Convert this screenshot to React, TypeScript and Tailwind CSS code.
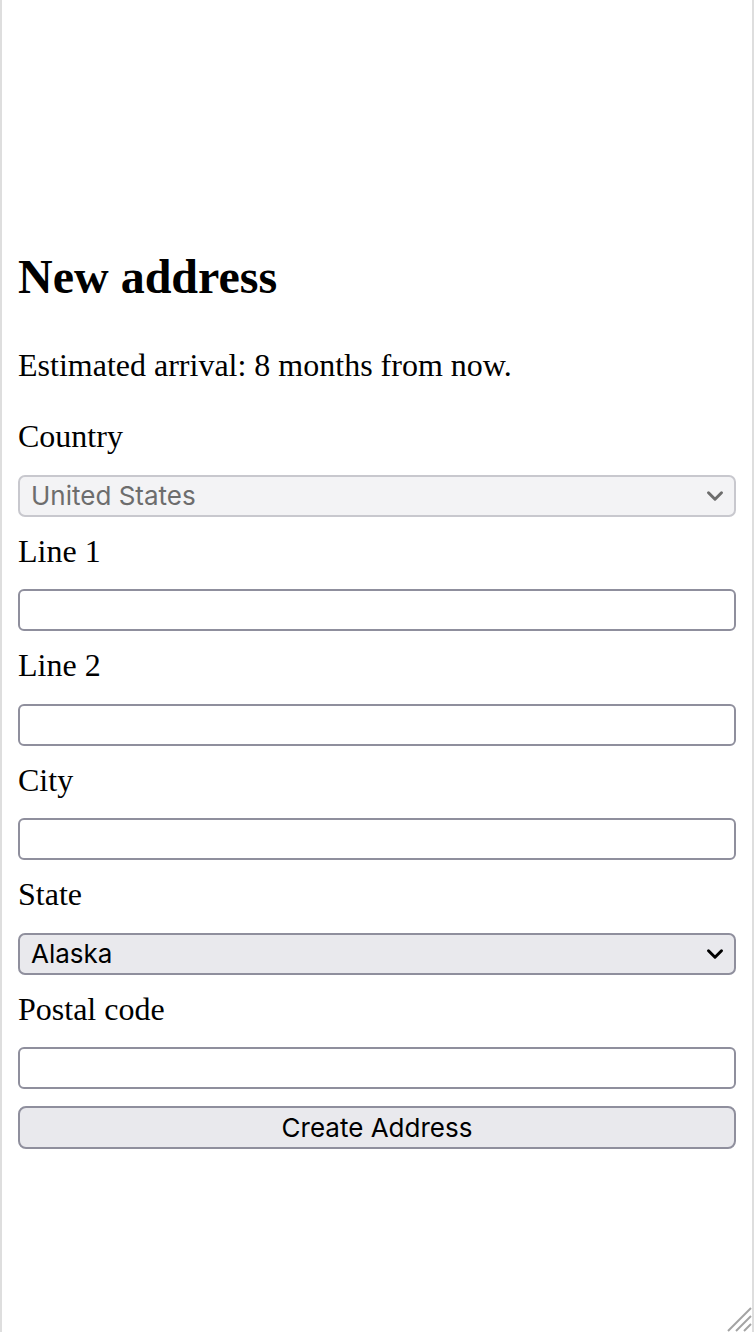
import { ChevronDown } from "lucide-react";

const serif = "font-['Liberation_Serif','Times_New_Roman',serif]";
const ui = "font-['Inter','Liberation_Sans',sans-serif]";

function Field({ label, children }: { label: string; children: React.ReactNode }) {
  return (
    <div className="mt-[11px] first:mt-0">
      <label className={`block pt-[5px] text-[32px] leading-[37px] text-black ${serif}`}>{label}</label>
      <div className="mt-[19.5px]">{children}</div>
    </div>
  );
}

function TextInput() {
  return (
    <input
      type="text"
      className={`block h-[42px] w-full rounded-[6px] border-2 border-[#8f8f9d] bg-white px-3 text-[26px] ${ui}`}
    />
  );
}

function Select({ value, disabled }: { value: string; disabled?: boolean }) {
  return (
    <div className="relative">
      <select
        disabled={disabled}
        defaultValue={value}
        className={`block h-[42px] w-full appearance-none rounded-[7px] border-2 pl-[11px] text-[26px] leading-[38px] ${ui} ${
          disabled
            ? "border-[#c8c8ce] bg-[#f3f3f5] text-[#6d6d6d]"
            : "border-[#8f8f9d] bg-[#e9e9ed] text-black"
        }`}
      >
        <option>{value}</option>
      </select>
      <ChevronDown
        strokeWidth={2.75}
        className={`pointer-events-none absolute right-[8px] top-[8px] h-[26px] w-[26px] ${
          disabled ? "text-[#6d6d6d]" : "text-black"
        }`}
      />
    </div>
  );
}

export default function App() {
  return (
    <div className="relative min-h-screen w-full border-x-2 border-[#dedede] bg-white px-4 pt-[249px]">
      <h1 className={`text-[48px] font-bold leading-[55px] text-black ${serif}`}>New address</h1>
      <p className={`mt-[43px] text-[32px] leading-[37px] text-black ${serif}`}>
        Estimated arrival: 8 months from now.
      </p>

      <form className="mt-[29px]" onSubmit={(e) => e.preventDefault()}>
        <Field label="Country">
          <Select value="United States" disabled />
        </Field>
        <Field label="Line 1">
          <TextInput />
        </Field>
        <Field label="Line 2">
          <TextInput />
        </Field>
        <Field label="City">
          <TextInput />
        </Field>
        <Field label="State">
          <Select value="Alaska" />
        </Field>
        <Field label="Postal code">
          <TextInput />
        </Field>
        <button
          type="submit"
          className={`mt-[17px] block h-[43px] w-full rounded-[8px] border-2 border-[#8f8f9d] bg-[#e9e9ed] text-[26px] leading-[39px] text-black ${ui}`}
        >
          Create Address
        </button>
      </form>

      <svg
        className="absolute bottom-0 right-0 h-[32px] w-[32px]"
        viewBox="0 0 32 32"
        stroke="#a3a3a3"
        strokeWidth="2"
      >
        <line x1="31" y1="8" x2="8" y2="31" />
        <line x1="31" y1="16" x2="16" y2="31" />
        <line x1="31" y1="24" x2="24" y2="31" />
      </svg>
    </div>
  );
}
